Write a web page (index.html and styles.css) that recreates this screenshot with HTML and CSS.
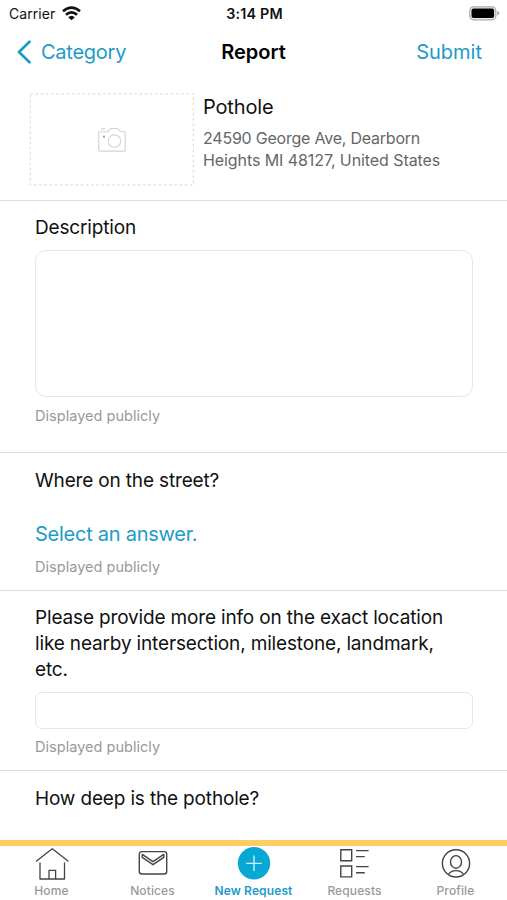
FILE: index.html
```html
<!DOCTYPE html>
<html lang="en">
<head>
<meta charset="utf-8">
<title>Report</title>
<link rel="stylesheet" href="styles.css">
</head>
<body>
<div class="screen">
  <div class="status">
    <div class="carrier"><span>Carrier</span>
      <svg width="19" height="15" viewBox="0 0 19 15" fill="none" stroke="#111" stroke-width="2.6"><path d="M1 5.2Q9.5-2 18 5.2M3.9 8.7Q9.5 4 15.1 8.7"/><path d="M6.2 11.2Q9.5 8.2 12.8 11.2L9.5 14.2Z" fill="#111" stroke="none"/></svg>
    </div>
    <span class="time">3:14 PM</span>
    <svg class="battery" width="31" height="15" viewBox="0 0 31 15"><rect x=".8" y=".8" width="26" height="13" rx="3.8" fill="#eee" stroke="#aaa" stroke-width="1.2"/><rect x="2.5" y="2.5" width="22.6" height="9.6" rx="2" fill="#000"/><path d="M28.2 5v4.6q2-.6 2-2.3t-2-2.3Z" fill="#aaa"/></svg>
  </div>
  <header class="nav">
    <a class="back"><svg width="15" height="24" viewBox="0 0 15 24" fill="none" stroke="#1c9bc9" stroke-width="2.7" stroke-linecap="round" stroke-linejoin="round"><path d="M12.5 1.7 2 12l10.5 10.3"/></svg><span>Category</span></a>
    <h1>Report</h1>
    <a class="submit">Submit</a>
  </header>
  <main>
    <section class="summary">
      <div class="photo">
        <svg class="dash" width="165" height="93" viewBox="0 0 165 93"><rect x="1.3" y=".9" width="163" height="91" fill="none" stroke="#dedede" stroke-width="1.2" stroke-dasharray="2.6 2.6"/></svg>
        <svg width="28" height="26" viewBox="0 0 28 26" fill="none" stroke="#d2d2d2" stroke-width="1.1"><path d="M1.5 4.8H9q1.4 0 2-1.3 1-2 2.8-2h4.7q1.8 0 2.5 1.6.8 1.7 2.3 1.7h3.2q.7 0 .7.8v17.7q0 .8-.8.8H1.5q-.8 0-.8-.8V5.5q0-.7.8-.7ZM3 1.9h4"/><circle cx="16.5" cy="14" r="6.3"/><circle cx="6" cy="9.6" r="1.1" fill="#999" stroke="none"/></svg>
      </div>
      <div class="place"><h2>Pothole</h2><p><span class="road">24590 George Ave, Dearborn</span><br><span>Heights MI 48127, United States</span></p></div>
    </section>
    <section class="description">
      <label>Description</label>
      <div class="box area"></div>
      <small>Displayed publicly</small>
    </section>
    <section class="street">
      <label>Where on the street?</label>
      <a class="select">Select an answer.</a>
      <small>Displayed publicly</small>
    </section>
    <section class="info">
      <label>Please provide more info on the exact location<br>like nearby intersection, milestone, landmark,<br>etc.</label>
      <div class="box line"></div>
      <small>Displayed publicly</small>
    </section>
    <section class="depth"><label>How deep is the pothole?</label></section>
  </main>
  <nav class="tabs">
    <a><svg width="34" height="34" viewBox="0 0 34 34" fill="none" stroke="#444" stroke-width="1.3" stroke-linecap="round" stroke-linejoin="round"><path d="M1.5 15 17.3 2.7 33 15M5 17V33h24.5V17M14 33v-8.7h6.6V33"/></svg><span>Home</span></a>
    <a><svg width="34" height="34" viewBox="0 0 34 34" fill="none" stroke="#444" stroke-width="1.4" stroke-linejoin="round"><rect x="3.3" y="5.6" width="27.4" height="22.4" rx="2.5"/><path d="m6.2 8.4 10.8 7.3L27.8 8.4v3L17 18.7 6.2 11.4Z"/></svg><span>Notices</span></a>
    <a class="active"><svg width="34" height="34" viewBox="0 0 34 34" fill="none"><circle cx="17" cy="17.3" r="16.2" fill="#08a8d4"/><path d="M17 9.6V25M9.3 17.3h15.4" stroke="#d9f4fc" stroke-width="1.3"/></svg><span>New Request</span></a>
    <a><svg width="34" height="34" viewBox="0 0 34 34" fill="none" stroke="#444" stroke-width="1.4"><path d="M2.8 3.8h10.9v10.9H2.8ZM2.8 20h10.9v10.9H2.8ZM18 4.6h12.6M18 10.6h8.8M18 20.6h12.6M18 26.7h8.8"/></svg><span>Requests</span></a>
    <a><svg width="34" height="34" viewBox="0 0 34 34" fill="none" stroke="#444" stroke-width="1.4"><circle cx="17" cy="17.4" r="13.6"/><ellipse cx="17" cy="15.9" rx="5.5" ry="6.3"/><path d="M9.3 28.6Q11.8 24.6 17 24.6T24.7 28.6"/></svg><span>Profile</span></a>
  </nav>
</div>
</body>
</html>
```
FILE: styles.css
```css
* { box-sizing: border-box; }
body { margin: 0; background: #fff; color: #111; font-family: Inter, "Liberation Sans", sans-serif; }
h1, h2, p { margin: 0; }
.screen { width: 507px; height: 900px; display: flex; flex-direction: column; overflow: hidden; }
.status { height: 27px; display: grid; grid-template-columns: 1fr auto 1fr; align-items: center; padding: 0 7px 0 9px; font-size: 14px; }
.carrier { display: flex; align-items: center; gap: 7px; letter-spacing: .05px; }
.time { font-size: 14.3px; font-weight: 600; letter-spacing: .2px; }
.battery { justify-self: end; }
.nav { height: 50px; display: grid; grid-template-columns: 1fr auto 1fr; align-items: center; padding: 0 25px; font-size: 20px; color: #1c9bc9; }
.back { display: flex; align-items: center; gap: 9px; margin-left: -8px; letter-spacing: -.25px; }
.nav h1 { font-size: 20px; font-weight: 600; color: #000; }
.submit { justify-self: end; }
main { flex: 1; overflow: hidden; }
section { border-bottom: 1px solid #dcdcdc; padding: 0 34px 0 35px; display: flex; flex-direction: column; align-items: flex-start; }
.summary { height: 124px; padding: 16px 0 0 29px; flex-direction: row; gap: 9px; }
.photo { width: 165px; height: 93px; display: grid; place-items: center; }
.photo svg { grid-area: 1 / 1; }
h2 { font-size: 20px; font-weight: 400; line-height: 26px; letter-spacing: -.15px; padding-top: 1px; }
.place p { font-size: 16px; line-height: 22px; color: #666; margin-top: 7px; letter-spacing: -.08px; }
.place .road { letter-spacing: -.22px; }
label { font-size: 19px; line-height: 26px; letter-spacing: -.16px; white-space: nowrap; }
small { font-size: 14.5px; line-height: 20px; letter-spacing: .03px; color: #999; }
.box { width: 438px; border: 1px solid #e6e6e6; }
.area { height: 147px; border-radius: 11px; margin: 9px 0 9px; }
.line { height: 37px; border-radius: 7px; margin: 9px 0 8px; }
.description { height: 252px; padding-top: 14px; }
.street { height: 138px; padding-top: 15px; }
.select { font-size: 20px; line-height: 26px; letter-spacing: -.25px; color: #1c9bc9; margin: 27px 0 10px; }
.info { height: 180px; padding-top: 14px; }
.depth { border: 0; padding-top: 15px; }
.tabs { height: 60px; border-top: 6px solid #ffcb63; display: grid; grid-template-columns: repeat(5, 101px); justify-content: center; background: #fff; }
.tabs a { display: flex; flex-direction: column; align-items: center; font-size: 12px; font-weight: 500; color: #999; line-height: 16px; letter-spacing: .12px; white-space: nowrap; }
.tabs span { margin-top: 3px; }
.tabs .active { color: #1c9bc9; font-weight: 600; }
```
